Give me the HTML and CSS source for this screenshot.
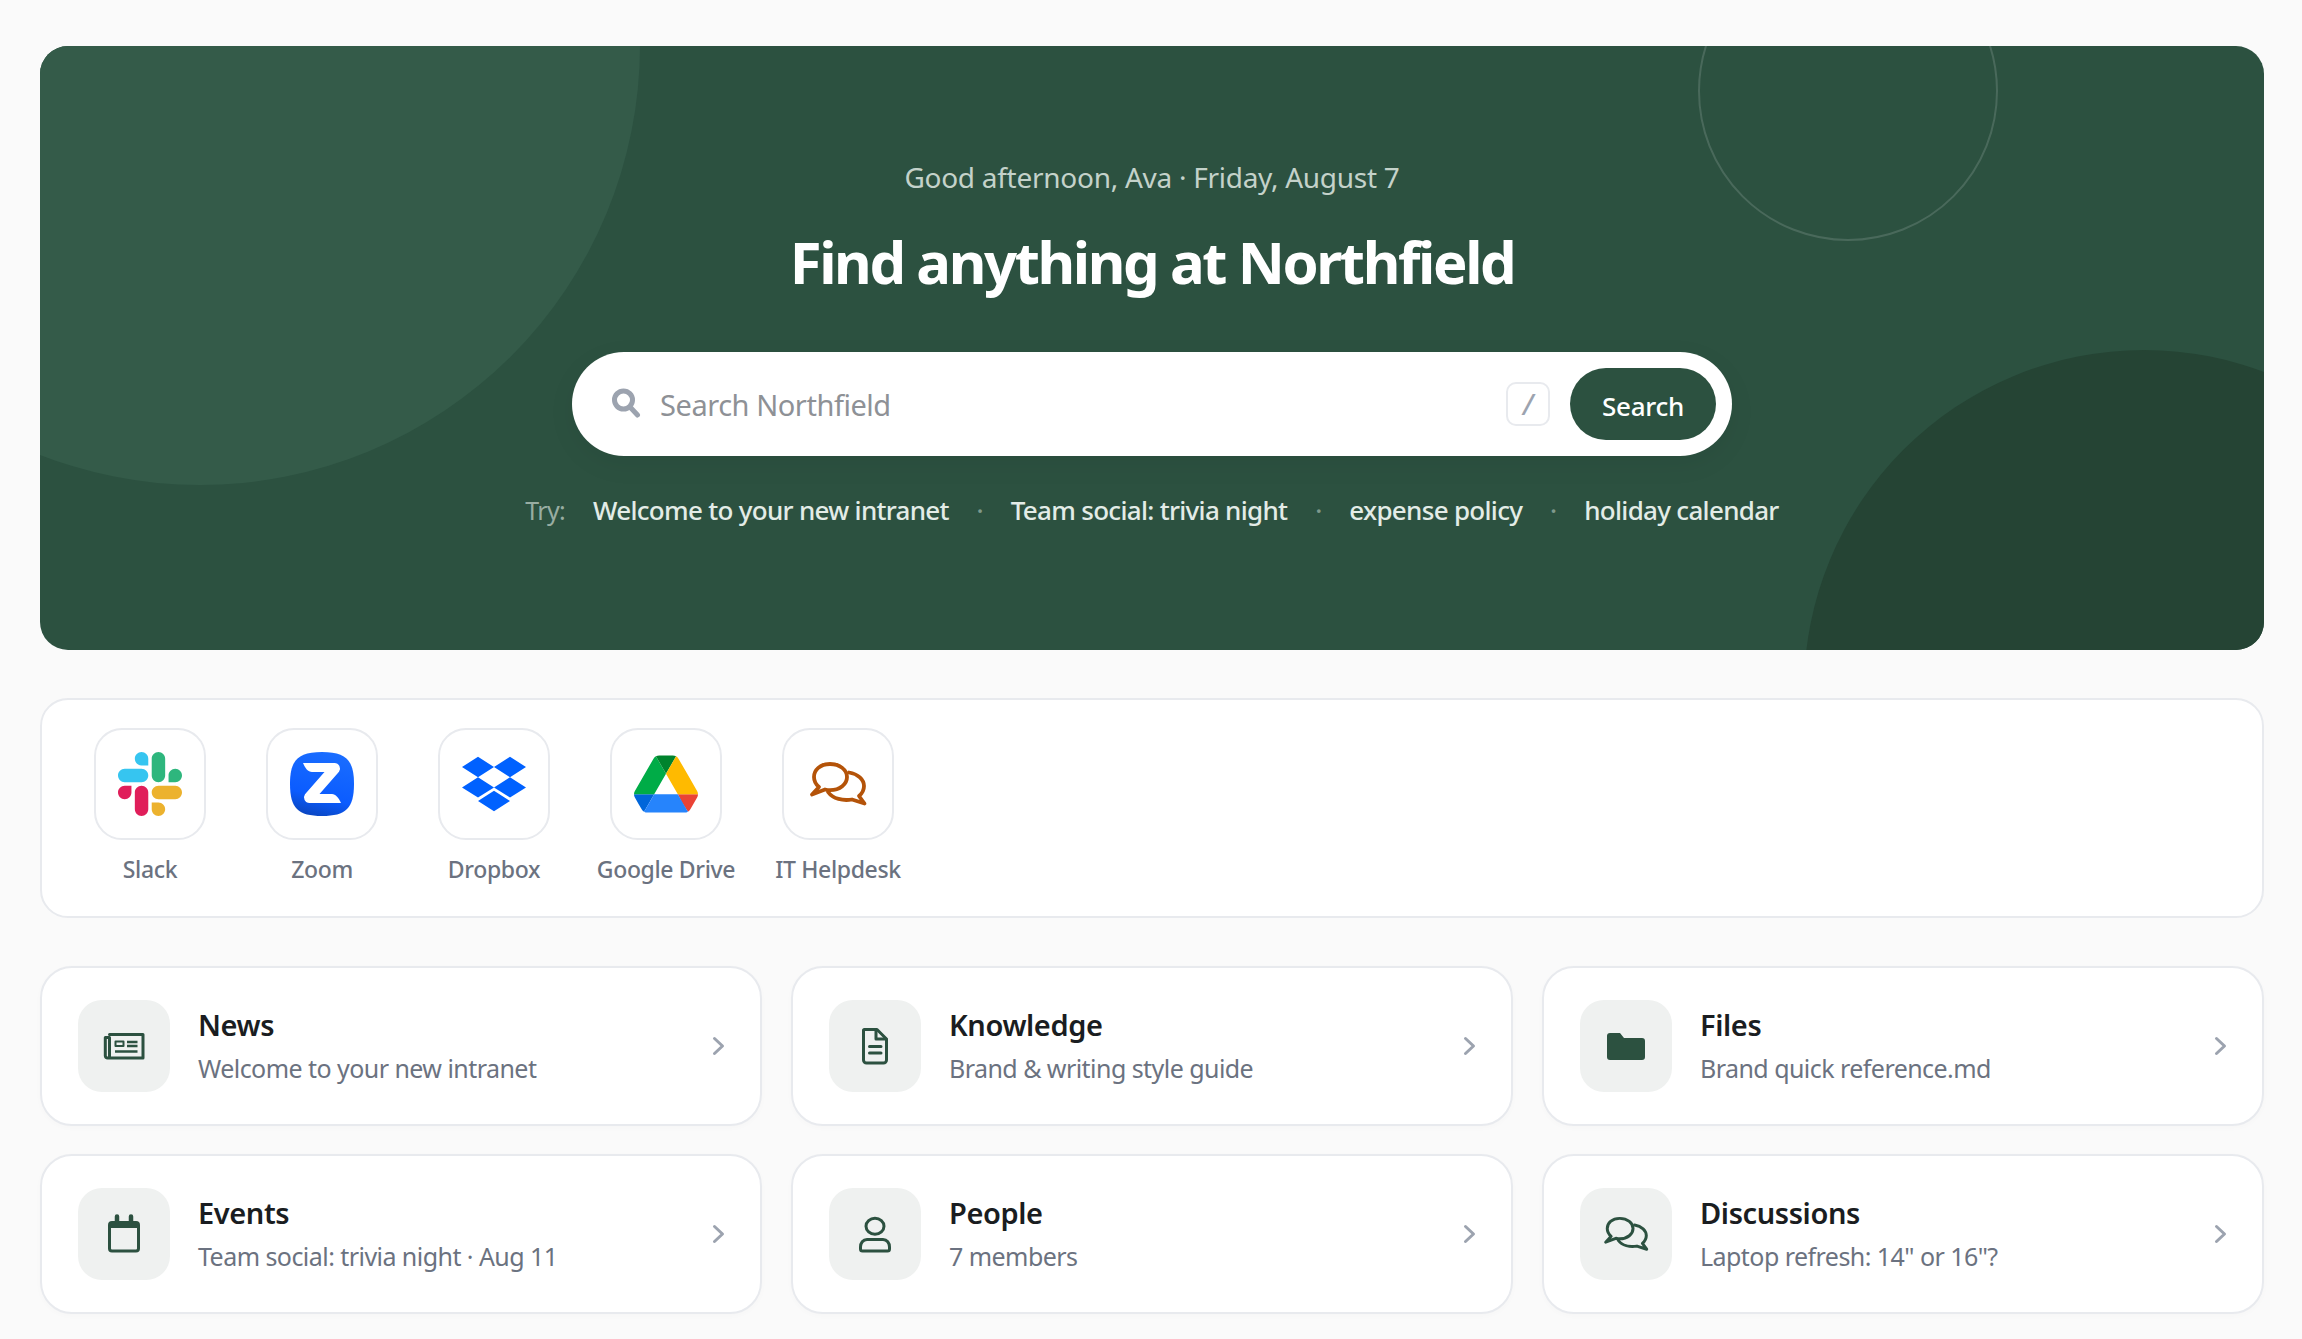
FILE: index.html
```html
<!DOCTYPE html>
<html lang="en">
<head>
  <meta charset="UTF-8">
  <title>Northfield Intranet</title>
  <link rel="stylesheet" href="styles.css">
</head>
<body>
  <svg class="defs" width="0" height="0">
    <symbol id="chats" viewBox="0 0 64 64">
      <path d="M24 12C14 12 8 18 8 25C8 29.5 10 32.5 13 35L6 42.5L19 37.5C21 38 22.5 38.2 24 38.2C34 38.2 41 32 41 25C41 18 34 12 24 12Z"/>
      <path d="M43 20.5C52 22 58 27.5 58 34C58 38 56 41.5 53 44L58.5 51.5L46 47.5C37 49 27 47 22 40"/>
    </symbol>
  </svg>

  <main class="page">
    <!-- Hero -->
    <section class="hero">
      <div class="blob blob-light"></div>
      <div class="blob blob-ring"></div>
      <div class="blob blob-dark"></div>

      <div class="hero-inner">
        <p class="greeting">Good afternoon, Ava · Friday, August 7</p>
        <h1>Find anything at Northfield</h1>

        <form class="search">
          <svg class="search-icon" width="30" height="30" viewBox="0 0 30 30" fill="none">
            <circle cx="12.5" cy="12" r="9"/>
            <path d="M19.5 19.500L26.500 27"/>
          </svg>
          <span class="search-text">Search Northfield</span>
          <kbd>/</kbd>
          <button type="button">Search</button>
        </form>

        <div class="try">
          <span class="try-label">Try:</span>
          <a href="#">Welcome to your new intranet</a>
          <i>·</i>
          <a href="#">Team social: trivia night</a>
          <i>·</i>
          <a href="#">expense policy</a>
          <i>·</i>
          <a href="#">holiday calendar</a>
        </div>
      </div>
    </section>

    <!-- App shortcuts -->
    <section class="apps">
      <a class="app" href="#">
        <span class="app-tile">
          <svg width="64" height="64" viewBox="0 0 122.8 122.8">
            <path fill="#E01E5A" d="M25.8 77.6c0 7.1-5.8 12.9-12.9 12.9S0 84.7 0 77.6s5.8-12.9 12.9-12.9h12.9v12.9zm6.5 0c0-7.1 5.8-12.9 12.9-12.9s12.9 5.8 12.9 12.9v32.3c0 7.1-5.8 12.9-12.9 12.9s-12.9-5.8-12.9-12.9V77.6z"/>
            <path fill="#36C5F0" d="M45.2 25.8c-7.1 0-12.9-5.8-12.9-12.9S38.1 0 45.2 0s12.9 5.8 12.9 12.9v12.9H45.2zm0 6.5c7.1 0 12.9 5.8 12.9 12.9s-5.8 12.9-12.9 12.9H12.9C5.8 58.1 0 52.3 0 45.2s5.8-12.9 12.9-12.9h32.3z"/>
            <path fill="#2EB67D" d="M97 45.2c0-7.1 5.8-12.9 12.9-12.9s12.9 5.8 12.9 12.9-5.8 12.9-12.9 12.9H97V45.2zm-6.5 0c0 7.1-5.8 12.9-12.9 12.9s-12.9-5.8-12.9-12.9V12.9C64.7 5.8 70.5 0 77.6 0s12.9 5.8 12.9 12.9v32.3z"/>
            <path fill="#ECB22E" d="M77.6 97c7.1 0 12.9 5.8 12.9 12.9s-5.8 12.9-12.9 12.9-12.9-5.8-12.9-12.9V97h12.9zm0-6.5c-7.1 0-12.9-5.8-12.9-12.9s5.8-12.9 12.9-12.9h32.3c7.1 0 12.9 5.8 12.9 12.9s-5.8 12.9-12.9 12.9H77.6z"/>
          </svg>
        </span>
        <span class="app-name">Slack</span>
      </a>
      <a class="app" href="#">
        <span class="app-tile">
          <svg width="64" height="64" viewBox="0 0 64 64">
            <defs>
              <linearGradient id="zoomBlue" x1="0.65" y1="0" x2="0.4" y2="1">
                <stop offset="0" stop-color="#1a6dff"/>
                <stop offset="0.7" stop-color="#0b5cff"/>
                <stop offset="1" stop-color="#0a47c4"/>
              </linearGradient>
            </defs>
            <path fill="url(#zoomBlue)" d="M32 0C56 0 64 8 64 32C64 56 56 64 32 64C8 64 0 56 0 32C0 8 8 0 32 0Z"/>
            <path fill="#fff" d="M13 11H44.500A5.500 5.500 0 0 1 49 19.700L29.500 42H42C45.500 42 49 46 51 51H19.500A5.500 5.500 0 0 1 15 42.300L34.500 20H22C18 20 15 16 13 11Z"/>
          </svg>
        </span>
        <span class="app-name">Zoom</span>
      </a>
      <a class="app" href="#">
        <span class="app-tile">
          <svg width="64" height="64" viewBox="0 0 24 24">
            <path fill="#0061FF" d="M6 1.807L0 5.629l6 3.822 6.001-3.822L6 1.807zM18 1.807l-6 3.822 6 3.822 6-3.822-6-3.822zM0 13.274l6 3.822 6.001-3.822L6 9.452l-6 3.822zM18 9.452l-6 3.822 6 3.822 6-3.822-6-3.822zM6 18.371l6.001 3.822 6-3.822-6-3.822L6 18.371z"/>
          </svg>
        </span>
        <span class="app-name">Dropbox</span>
      </a>
      <a class="app" href="#">
        <span class="app-tile">
          <svg width="64" height="58" viewBox="0 0 87.3 78">
            <path fill="#0066da" d="m6.6 66.85 3.85 6.65c.8 1.4 1.95 2.5 3.3 3.3l13.75-23.8h-27.5c0 1.55.4 3.1 1.2 4.5z"/>
            <path fill="#00ac47" d="m43.65 25-13.75-23.8c-1.35.8-2.5 1.9-3.3 3.3l-25.4 44a9.06 9.06 0 0 0 -1.2 4.5h27.5z"/>
            <path fill="#ea4335" d="m73.55 76.8c1.35-.8 2.5-1.9 3.3-3.3l1.6-2.75 7.65-13.25c.8-1.4 1.2-2.95 1.2-4.5h-27.502l5.852 11.5z"/>
            <path fill="#00832d" d="m43.65 25 13.75-23.8c-1.35-.8-2.9-1.2-4.5-1.2h-18.5c-1.6 0-3.15.45-4.5 1.2z"/>
            <path fill="#2684fc" d="m59.8 53h-32.3l-13.75 23.8c1.35.8 2.9 1.2 4.5 1.2h50.8c1.6 0 3.15-.45 4.5-1.2z"/>
            <path fill="#ffba00" d="m73.4 26.5-12.7-22c-.8-1.4-1.95-2.5-3.3-3.3l-13.75 23.8 16.15 28h27.45c0-1.55-.4-3.1-1.2-4.5z"/>
          </svg>
        </span>
        <span class="app-name">Google Drive</span>
      </a>
      <a class="app" href="#">
        <span class="app-tile helpdesk">
          <svg class="chat-icon" width="64" height="64"><use href="#chats"/></svg>
        </span>
        <span class="app-name">IT Helpdesk</span>
      </a>
    </section>

    <!-- Sections -->
    <section class="cards">
      <a class="card" href="#">
        <span class="card-icon">
          <svg class="line-icon" width="48" height="48" viewBox="0 0 48 48">
            <path d="M9.500 12.500H43V36H7.500A2.200 2.200 0 0 1 5.300 33.800V15.500H9.500V36"/>
            <rect class="solid" x="15.500" y="19.500" width="8" height="4.500"/>
            <path class="thin" d="M27 20H37.500M27 24H37.500M15 29.500H37.500"/>
          </svg>
        </span>
        <span class="card-text">
          <strong>News</strong>
          <span>Welcome to your new intranet</span>
        </span>
        <svg class="chevron" width="14" height="20" viewBox="0 0 14 20"><path d="M2.500 2.500L10.500 10L2.500 17.500"/></svg>
      </a>
      <a class="card" href="#">
        <span class="card-icon">
          <svg class="line-icon" width="48" height="48" viewBox="0 0 48 48">
            <path d="M13 7.500H26L35.500 17V38A3 3 0 0 1 32.500 41H15.500A3 3 0 0 1 12.500 38V8Z"/>
            <path d="M25 8V17H35M18.500 24.500H30M18.500 31H30"/>
          </svg>
        </span>
        <span class="card-text">
          <strong>Knowledge</strong>
          <span>Brand &amp; writing style guide</span>
        </span>
        <svg class="chevron" width="14" height="20" viewBox="0 0 14 20"><path d="M2.500 2.500L10.500 10L2.500 17.500"/></svg>
      </a>
      <a class="card" href="#">
        <span class="card-icon">
          <svg width="48" height="48" viewBox="0 0 48 48">
            <path fill="#2c5140" d="M8 11H18L22 16H40A3 3 0 0 1 43 19V35A3 3 0 0 1 40 38H8A3 3 0 0 1 5 35V14A3 3 0 0 1 8 11Z"/>
          </svg>
        </span>
        <span class="card-text">
          <strong>Files</strong>
          <span>Brand quick reference.md</span>
        </span>
        <svg class="chevron" width="14" height="20" viewBox="0 0 14 20"><path d="M2.500 2.500L10.500 10L2.500 17.500"/></svg>
      </a>
      <a class="card" href="#">
        <span class="card-icon">
          <svg class="line-icon" width="48" height="48" viewBox="0 0 48 48">
            <rect x="9.500" y="12.500" width="29" height="28.500" rx="2.500"/>
            <path class="band" d="M9.500 15H38.500"/>
            <path class="tab" d="M17 6.500V12M31 6.500V12"/>
          </svg>
        </span>
        <span class="card-text">
          <strong>Events</strong>
          <span>Team social: trivia night · Aug 11</span>
        </span>
        <svg class="chevron" width="14" height="20" viewBox="0 0 14 20"><path d="M2.500 2.500L10.500 10L2.500 17.500"/></svg>
      </a>
      <a class="card" href="#">
        <span class="card-icon">
          <svg class="line-icon" width="48" height="48" viewBox="0 0 48 48">
            <ellipse cx="24" cy="16.200" rx="9" ry="8"/>
            <path d="M16 29.500H32C36 29.500 38.500 33 38.500 37V39A2 2 0 0 1 36.500 41H11.500A2 2 0 0 1 9.500 39V37C9.500 33 12 29.500 16 29.500Z"/>
          </svg>
        </span>
        <span class="card-text">
          <strong>People</strong>
          <span>7 members</span>
        </span>
        <svg class="chevron" width="14" height="20" viewBox="0 0 14 20"><path d="M2.500 2.500L10.500 10L2.500 17.500"/></svg>
      </a>
      <a class="card" href="#">
        <span class="card-icon">
          <svg class="chat-icon" width="50" height="50"><use href="#chats"/></svg>
        </span>
        <span class="card-text">
          <strong>Discussions</strong>
          <span>Laptop refresh: 14" or 16"?</span>
        </span>
        <svg class="chevron" width="14" height="20" viewBox="0 0 14 20"><path d="M2.500 2.500L10.500 10L2.500 17.500"/></svg>
      </a>
    </section>
  </main>
</body>
</html>
```

FILE: styles.css
```css
* {
  box-sizing: border-box;
}

body {
  margin: 0;
  background: #fafafa;
  font-family: "Noto Sans", "Open Sans", sans-serif;
  color: #1a1d21;
}

a {
  color: inherit;
  text-decoration: none;
}

.defs {
  position: absolute;
}

.page {
  display: flex;
  flex-direction: column;
  gap: 48px;
  padding: 46px 38px 24px 40px;
}

/* Hero */
.hero {
  position: relative;
  height: 604px;
  overflow: hidden;
  border-radius: 28px;
  background: #2c5140;
}

.blob {
  position: absolute;
  border-radius: 50%;
}

.blob-light {
  top: -441px;
  left: -280px;
  width: 880px;
  height: 880px;
  background: #345b49;
}

.blob-ring {
  top: -105px;
  right: 266px;
  width: 300px;
  height: 300px;
  border: 2px solid rgba(255, 255, 255, 0.14);
}

.blob-dark {
  top: 304px;
  right: -220px;
  width: 680px;
  height: 680px;
  background: #254434;
}

.hero-inner {
  position: relative;
  display: flex;
  flex-direction: column;
  align-items: center;
  padding-top: 108px;
}

.greeting {
  margin: 0;
  font-size: 28px;
  line-height: 46px;
  letter-spacing: -0.270px;
  color: #c4d2ca;
}

h1 {
  margin: 23px 0 0;
  font-size: 58px;
  line-height: 78px;
  font-weight: 700;
  letter-spacing: -2.400px;
  color: #fff;
}

.search {
  display: flex;
  align-items: center;
  width: 1160px;
  height: 104px;
  margin-top: 51px;
  padding: 16px 16px 16px 39px;
  border-radius: 52px;
  background: #fff;
  box-shadow: 0 8px 28px rgba(0, 0, 0, 0.06);
}

.search-icon {
  flex: none;
  margin-top: -2px;
  stroke: #9ca3af;
  stroke-width: 5px;
  stroke-linecap: round;
}

.search-text {
  flex: 1;
  margin-left: 19px;
  font-size: 29px;
  letter-spacing: -0.450px;
  color: #8e9196;
}

kbd {
  display: flex;
  align-items: center;
  justify-content: center;
  width: 44px;
  height: 44px;
  margin-right: 20px;
  border: 2px solid #e8eaee;
  border-radius: 10px;
  font-family: inherit;
  font-size: 28px;
  font-weight: 500;
  font-style: italic;
  color: #9ca3af;
}

.search button {
  width: 146px;
  height: 72px;
  padding-top: 4px;
  border: none;
  border-radius: 36px;
  background: #2c5140;
  font-family: inherit;
  font-size: 26px;
  font-weight: 500;
  letter-spacing: -0.300px;
  color: #fff;
}

.try {
  display: flex;
  align-items: center;
  margin-top: 34px;
  font-size: 26px;
  line-height: 40px;
  font-weight: 500;
  letter-spacing: -0.700px;
  color: #e3ece7;
}

.try-label {
  margin-right: 28px;
  font-size: 25px;
  font-weight: 400;
  color: #98ada2;
}

.try i {
  width: 62px;
  text-align: center;
  font-style: normal;
  color: #7f998c;
}

/* App shortcuts */
.apps {
  display: flex;
  gap: 24px;
  height: 220px;
  padding: 28px 34px 0;
  border: 2px solid #e8eaee;
  border-radius: 28px;
  background: #fff;
}

.app {
  display: flex;
  flex-direction: column;
  align-items: center;
  width: 148px;
}

.app-tile {
  display: flex;
  align-items: center;
  justify-content: center;
  width: 112px;
  height: 112px;
  border: 2px solid #e8eaee;
  border-radius: 28px;
  background: #fff;
}

.app-name {
  margin-top: 13px;
  font-size: 23px;
  line-height: 32px;
  font-weight: 500;
  letter-spacing: -0.350px;
  white-space: nowrap;
  color: #6b7280;
}

.chat-icon {
  fill: none;
  stroke: #2c5140;
  stroke-width: 3.800px;
  stroke-linejoin: round;
  stroke-linecap: round;
}

.helpdesk .chat-icon {
  stroke: #b45309;
}

/* Section cards */
.cards {
  display: grid;
  grid-template-columns: repeat(3, 1fr);
  gap: 28px 29px;
}

.card {
  display: flex;
  align-items: center;
  height: 160px;
  padding: 0 34px 0 36px;
  border: 2px solid #e8eaee;
  border-radius: 32px;
  background: #fff;
  box-shadow: 0 2px 6px rgba(0, 0, 0, 0.02);
}

.card-icon {
  display: flex;
  flex: none;
  align-items: center;
  justify-content: center;
  width: 92px;
  height: 92px;
  border-radius: 24px;
  background: #eff1f0;
}

.line-icon {
  fill: none;
  stroke: #2c5140;
  stroke-width: 3px;
  stroke-linejoin: round;
  stroke-linecap: round;
}

.line-icon .thin {
  stroke-width: 2.600px;
  stroke-linecap: butt;
}

.line-icon .solid {
  stroke-width: 2px;
}

.line-icon .band {
  stroke-width: 6px;
  stroke-linecap: butt;
}

.line-icon .tab {
  stroke-width: 4.500px;
  stroke-linecap: round;
}

.card-text {
  display: flex;
  flex: 1;
  flex-direction: column;
  margin-left: 28px;
}

.card-text strong {
  font-size: 29px;
  line-height: 42px;
  font-weight: 600;
  letter-spacing: -0.400px;
  color: #1a1d21;
}

.card-text span {
  margin-top: 2px;
  font-size: 25px;
  line-height: 40px;
  letter-spacing: -0.550px;
  color: #6b7280;
}

.chevron {
  flex: none;
  fill: none;
  stroke: #9ca3af;
  stroke-width: 3px;
  stroke-linecap: round;
  stroke-linejoin: round;
}
```
